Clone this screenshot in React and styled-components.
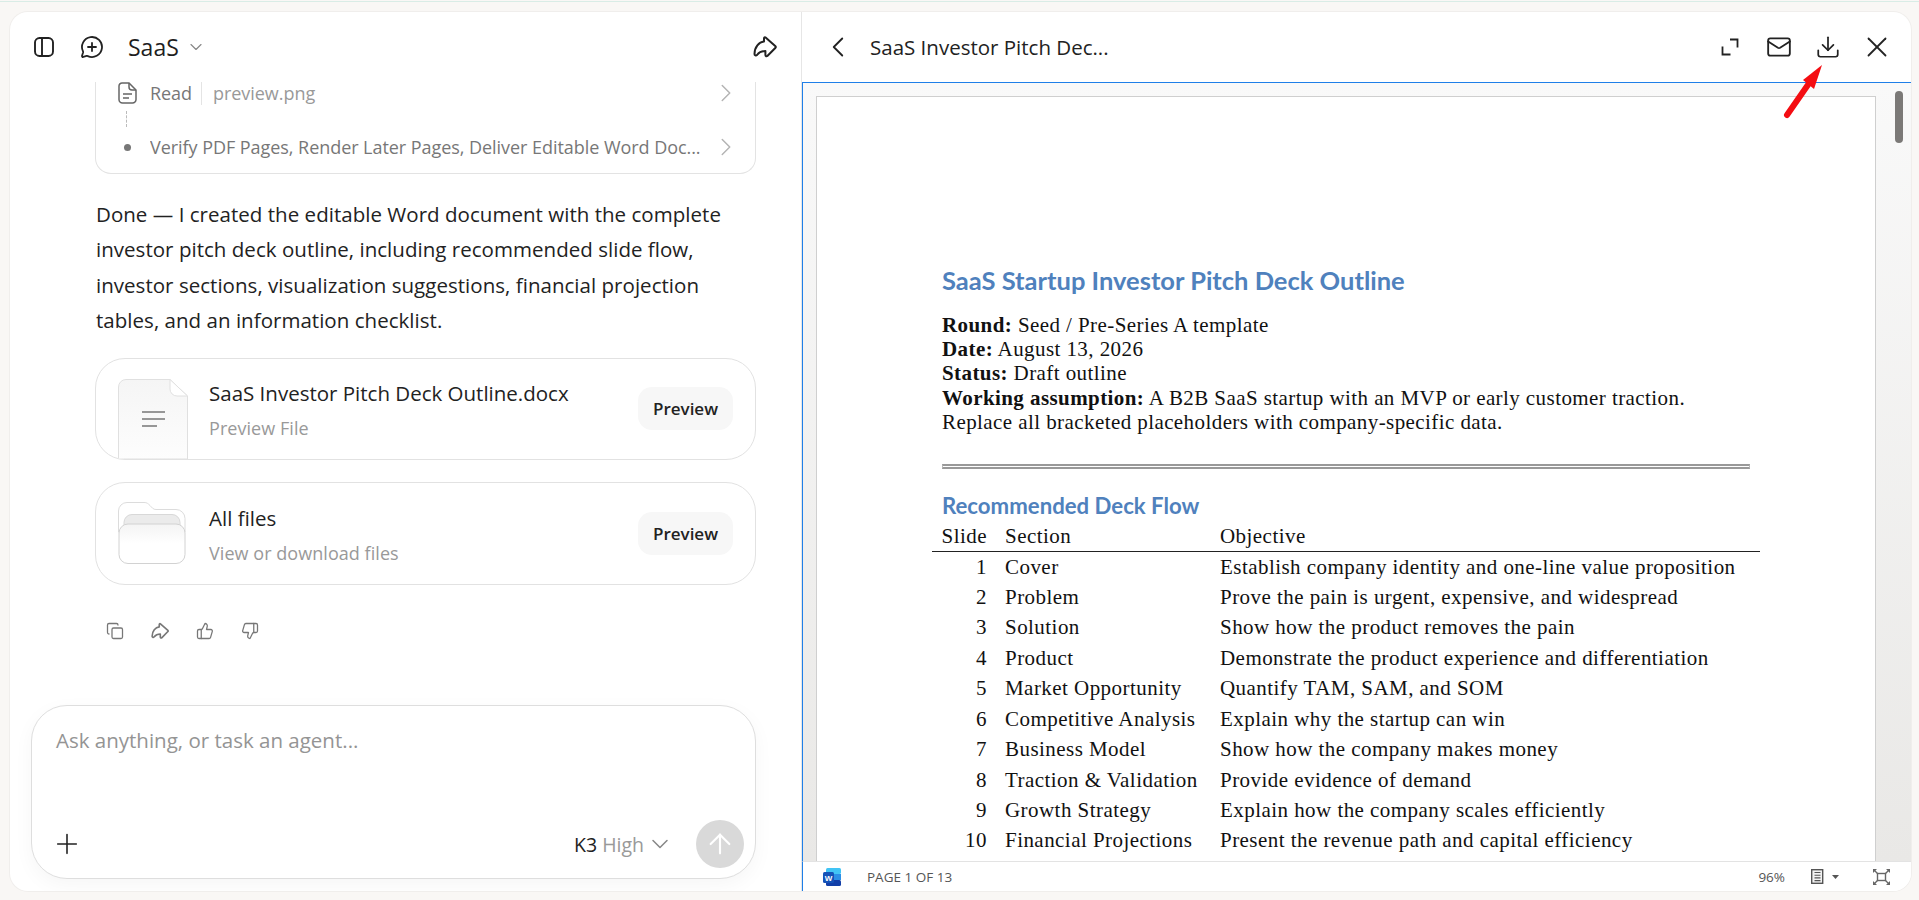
import styled, { createGlobalStyle } from "styled-components";
import {
  ArrowUp,
  ChevronDown,
  ChevronLeft,
  ChevronRight,
  Copy,
  Download,
  Mail,
  MessageCirclePlus,
  Plus,
  ThumbsDown,
  ThumbsUp,
  X,
} from "lucide-react";

const SANS = `"Open Sans", "Noto Sans", sans-serif`;
const DOC = `"Liberation Serif", serif`;
const BLUE = "#1f7fe8";

const GlobalStyle = createGlobalStyle`
  html, body {
    margin: 0;
    height: 100%;
    overflow: hidden;
    background: #f9f7f5;
    font-family: ${SANS};
  }
  * { box-sizing: border-box; }
`;

const Page = styled.div`
  width: 1919px;
  height: 899px;
  margin-top: 1px;
  border-top: 1px solid #d9ece6;
  padding: 10px 8px 9px 10px;
  position: relative;
`;

const Shell = styled.div`
  display: flex;
  height: 100%;
  background: #fff;
  border-radius: 18px;
  box-shadow: 0 0 0 1px #f0eeec;
  overflow: hidden;
`;

const ChatPanel = styled.section`
  width: 792px;
  flex: none;
  display: flex;
  flex-direction: column;
  border-right: 1px solid #e6e6e6;
`;

const ChatHeader = styled.header`
  height: 70px;
  flex: none;
  display: flex;
  align-items: center;
  padding: 0 24px;
`;

const IconBtn = styled.span`
  display: inline-flex;
  align-items: center;
  justify-content: center;
  color: ${(p) => p.$color || "#222"};
  margin-right: ${(p) => p.$mr || 0}px;
  margin-left: ${(p) => p.$ml || 0};
`;

const ChatTitle = styled.div`
  font-size: 23px;
  color: #1f1f1f;
  margin-right: 7px;
`;

const ChatBody = styled.div`
  flex: 1;
  min-height: 0;
  overflow: hidden;
  padding: 0 45px 0 85px;
`;

const ToolCard = styled.div`
  height: 92px;
  border: 1px solid #e3e3e3;
  border-top: none;
  border-radius: 0 0 16px 16px;
  padding: 0 14px 0 21px;
`;

const ToolRow = styled.div`
  display: flex;
  align-items: center;
  height: 22px;
  color: #777;
  font-size: 18px;
  letter-spacing: -0.05px;
  margin-top: ${(p) => p.$mt}px;
`;

const ToolIcon = styled.span`
  width: 20px;
  flex: none;
  margin-right: 13px;
  display: flex;
  justify-content: center;
`;

const Bullet = styled.i`
  width: 7px;
  height: 7px;
  border-radius: 50%;
  background: #777;
`;

const Dashed = styled.div`
  height: 16px;
  width: 0;
  margin: 7px 0 -23px 9px;
  border-left: 1px dashed #bbb;
`;

const ToolName = styled.span`
  padding-right: 9px;
  margin-right: 11px;
  border-right: 1px solid #e4e4e4;
`;

const ToolFile = styled.span`
  color: #999;
`;

const ToolText = styled.span`
  flex: 1;
  white-space: nowrap;
  overflow: hidden;
`;

const Message = styled.p`
  margin: 23px 0 0 1px;
  font-size: 20.5px;
  line-height: 35.4px;
  color: #222;
  letter-spacing: 0.03px;
  width: 640px;
`;

const FileCard = styled.div`
  display: flex;
  align-items: center;
  height: ${(p) => p.$h}px;
  margin-top: ${(p) => p.$mt}px;
  border: 1px solid #e2e2e2;
  border-radius: 30px;
  padding: 0 22px 0 22px;
  overflow: hidden;
`;

const FileGlyph = styled.span`
  flex: none;
  align-self: flex-end;
  margin-right: 21px;
`;

const FolderGlyph = styled.span`
  flex: none;
  display: flex;
  margin-right: 23px;
`;

const FileMeta = styled.div`
  flex: 1;
  padding-top: 2px;
`;

const FileName = styled.div`
  font-size: 20.5px;
  line-height: 28px;
  color: #222;
`;

const FileSub = styled.div`
  font-size: 18px;
  line-height: 24px;
  margin-top: 9px;
  color: #999;
  letter-spacing: 0.05px;
`;

const PreviewBtn = styled.button`
  width: 95px;
  height: 43px;
  border: none;
  border-radius: 14px;
  background: #f7f7f7;
  color: #222;
  font-family: ${SANS};
  font-size: 17px;
  font-weight: 600;
`;

const Actions = styled.div`
  display: flex;
  gap: 27px;
  padding: 37px 0 0 11px;
  color: #777;
`;

const Composer = styled.div`
  flex: none;
  height: 174px;
  margin: 0 45px 12px 21px;
  padding: 20px 11px 10px 24px;
  border: 1px solid #dedede;
  border-radius: 36px;
  background: #fff;
  box-shadow: 0 6px 20px rgba(0, 0, 0, 0.04);
  display: flex;
  flex-direction: column;
  justify-content: space-between;
`;

const Placeholder = styled.div`
  font-size: 20.5px;
  line-height: 28px;
  color: #949494;
`;

const ComposerRow = styled.div`
  display: flex;
  align-items: center;
  margin-left: -5px;
`;

const ModelLabel = styled.span`
  margin-left: auto;
  font-size: 19.5px;
  color: #222;
`;

const ModelLevel = styled.span`
  margin-left: 5px;
  margin-right: 2px;
  font-size: 19.5px;
  color: #999;
`;

const SendBtn = styled.span`
  width: 48px;
  height: 48px;
  margin-left: 22px;
  border-radius: 50%;
  background: #d9d9d9;
  color: #fff;
  display: flex;
  align-items: center;
  justify-content: center;
`;

const PreviewPanel = styled.section`
  flex: 1;
  min-width: 0;
  display: flex;
  flex-direction: column;
`;

const PreviewHeader = styled.header`
  height: 70px;
  flex: none;
  display: flex;
  align-items: center;
  padding: 0 10px 0 19px;
  color: #222;
`;

const PreviewTitle = styled.div`
  flex: 1;
  margin-left: 15px;
  font-size: 20.5px;
`;

const HeaderTools = styled.div`
  display: grid;
  grid-template-columns: repeat(4, 49px);
  justify-items: center;
  align-items: center;
`;

const Viewer = styled.div`
  flex: 1;
  min-height: 0;
  position: relative;
  overflow: hidden;
  background: linear-gradient(#f9f9f9, #e9e8e6);
  border-top: 1px solid ${BLUE};
  border-left: 1px solid ${BLUE};
  padding: 13px 35px 0 13px;
`;

const Scrollbar = styled.div`
  position: absolute;
  top: 8px;
  right: 8px;
  width: 8px;
  height: 52px;
  border-radius: 4px;
  background: #7b7977;
`;

const DocPage = styled.article`
  height: 100%;
  background: #fff;
  border: 1px solid #cfcfcf;
  border-bottom: none;
  overflow: hidden;
  padding: 167px 125px 0 125px;
  color: #111;
  font-family: ${DOC};
`;

const DocTitle = styled.h1`
  margin: 0;
  font-family: Lato, sans-serif;
  font-weight: 700;
  font-size: 25.5px;
  line-height: 32px;
  color: #4f81bd;
`;

const DocMeta = styled.p`
  margin: 16.5px 0 0;
  font-size: 21px;
  line-height: 24.4px;
  white-space: nowrap;
  letter-spacing: 0.42px;
`;

const DoubleRule = styled.div`
  height: 5px;
  margin: 29px 0 0;
  border-top: 2px solid #999;
  border-bottom: 2px solid #999;
  border-left: 1px solid #bbb;
  border-right: 1px solid #bbb;
`;

const DocH2 = styled.h2`
  margin: 24px 0 0;
  font-family: Lato, sans-serif;
  font-weight: 700;
  font-size: 22.2px;
  line-height: 26px;
  color: #4f81bd;
`;

const Table = styled.div`
  margin: 3px -10px 0 -10px;
  font-size: 21px;
  letter-spacing: 0.45px;
`;

const TableRow = styled.div`
  display: grid;
  grid-template-columns: 55px 233px 1fr;
  height: ${(p) => (p.$head ? 30 : 30.45)}px;
  line-height: ${(p) => (p.$head ? 29 : 30)}px;
  white-space: nowrap;
  border-bottom: ${(p) => (p.$head ? "1px solid #222" : "none")};
`;

const SlideCell = styled.span`
  text-align: right;
`;

const SectionCell = styled.span`
  padding-left: 18px;
`;

const StatusBar = styled.footer`
  height: 30px;
  flex: none;
  display: flex;
  align-items: center;
  background: #fff;
  border-top: 1px solid #e3e3e3;
  border-left: 1px solid ${BLUE};
  padding: 0 21px 0 20px;
  font-size: 13.5px;
  color: #555;
`;

const PageCount = styled.span`
  flex: 1;
  margin-left: 26px;
`;

const Zoom = styled.span`
  margin-right: 26px;
  font-size: 13.5px;
`;

const RedArrow = styled.svg`
  position: absolute;
  left: 1782px;
  top: 60px;
  pointer-events: none;
`;

const rows = [
  ["1", "Cover", "Establish company identity and one-line value proposition"],
  ["2", "Problem", "Prove the pain is urgent, expensive, and widespread"],
  ["3", "Solution", "Show how the product removes the pain"],
  ["4", "Product", "Demonstrate the product experience and differentiation"],
  ["5", "Market Opportunity", "Quantify TAM, SAM, and SOM"],
  ["6", "Competitive Analysis", "Explain why the startup can win"],
  ["7", "Business Model", "Show how the company makes money"],
  ["8", "Traction & Validation", "Provide evidence of demand"],
  ["9", "Growth Strategy", "Explain how the company scales efficiently"],
  ["10", "Financial Projections", "Present the revenue path and capital efficiency"],
];

function SidebarIcon() {
  return (
    <svg width="20" height="20" viewBox="0 0 20 20" fill="none" stroke="#222" strokeWidth="1.9">
      <rect x="1" y="1" width="18" height="18" rx="4.5" />
      <path d="M8 1v18" />
    </svg>
  );
}

function ShareIcon({ size, sw }) {
  return (
    <svg width={size} height={size} viewBox="0 0 24 22" fill="none" stroke="currentColor" strokeWidth={sw} strokeLinejoin="round">
      <path d="M12.6 1.5 22.5 10.2a1 1 0 0 1 0 1.5L14.6 19.8c-1 1-2.2.4-2.2-.8V15C8.5 15 6 16.5 4 19c-1 1-2.5.3-2.5-1C1.5 11 6 6 11 5.5V2.5c0-1 .9-1.6 1.6-1z" />
    </svg>
  );
}

function ReadIcon() {
  return (
    <svg width="19" height="22" viewBox="0 0 19 22" fill="none" stroke="#666" strokeWidth="1.5">
      <path d="M4 1h7l7 7v9.5a3.5 3.5 0 0 1-3.5 3.5h-10A3.5 3.5 0 0 1 1 17.5V4a3 3 0 0 1 3-3z" />
      <path d="M11 1v4a3 3 0 0 0 3 3h4M5 12h9M5 16h6" />
    </svg>
  );
}

function DocFileIcon() {
  return (
    <svg width="70" height="80" viewBox="0 0 70 80" style={{ display: "block" }}>
      <defs>
        <linearGradient id="fileFill" x1="0" y1="0" x2="0" y2="1">
          <stop offset="0" stopColor="#f5f5f5" />
          <stop offset="1" stopColor="#fdfdfd" />
        </linearGradient>
      </defs>
      <path
        d="M8 .5h44L69.5 17v63H.5V8A7.5 7.5 0 0 1 8 .5z"
        fill="url(#fileFill)"
        stroke="#e0e0e0"
      />
      <path d="M52 .5V10a7 7 0 0 0 7 7h10.5z" fill="#fff" stroke="#e0e0e0" />
      <path d="M24 33h23M24 40h23M24 47h15" stroke="#777" strokeWidth="1.5" />
    </svg>
  );
}

function FolderIcon() {
  return (
    <svg width="68" height="62" viewBox="0 0 68 62">
      <defs>
        <linearGradient id="folderFill" x1="0" y1="0" x2="0" y2="1">
          <stop offset="0" stopColor="#f4f4f4" />
          <stop offset="0.5" stopColor="#fff" />
        </linearGradient>
      </defs>
      <path
        d="M9 .5h17c3 0 4 1 6 3s3 4 6 4h20a9 9 0 0 1 9 9V30H.5V9A8.5 8.5 0 0 1 9 .5z"
        fill="#fff"
        stroke="#dcdcdc"
      />
      <rect x="6" y="12.5" width="56" height="24" rx="8" fill="#ebebeb" stroke="#d8d8d8" />
      <rect x="1" y="22" width="66" height="39.5" rx="9" fill="url(#folderFill)" stroke="#d2d2d2" />
    </svg>
  );
}

function ExpandIcon() {
  return (
    <svg width="18" height="18" viewBox="0 0 18 18" fill="none" stroke="#222" strokeWidth="1.8">
      <path d="M9 1.5h7.5v8M1.5 8.5v8h8" />
    </svg>
  );
}

function WordIcon() {
  return (
    <svg width="18" height="18" viewBox="0 0 18 18">
      <rect x="3" y="0" width="15" height="6" rx="1.5" fill="#41c4f5" />
      <rect x="3" y="6" width="15" height="6" fill="#2b8fe6" />
      <rect x="3" y="12" width="15" height="6" rx="1.5" fill="#123fa8" />
      <rect x="0" y="4" width="11" height="11" rx="1.5" fill="#1553b8" />
      <text x="5.5" y="12.5" textAnchor="middle" fontSize="8" fontWeight="700" fill="#fff" fontFamily="Liberation Sans">
        W
      </text>
    </svg>
  );
}

function LayoutIcon() {
  return (
    <svg width="28" height="15" viewBox="0 0 28 15" fill="none" style={{ marginRight: 34 }}>
      <rect x="0.7" y="0.7" width="11" height="13.6" fill="#f2f2f2" stroke="#555" strokeWidth="1.4" />
      <path d="M3.5 3.5h6M3.5 6.2h6M3.5 8.9h6M3.5 11.6h6" stroke="#555" strokeWidth="1.1" />
      <path d="M21 6h7l-3.5 4z" fill="#555" />
    </svg>
  );
}

function FullscreenIcon() {
  return (
    <svg width="17" height="16" viewBox="0 0 17 16" fill="none" stroke="#666">
      <rect x="4.5" y="4.5" width="8" height="7" strokeWidth="1.4" />
      <path d="M4.5 4.5 1 1M12.5 4.5 16 1M4.5 11.5 1 15M12.5 11.5 16 15" strokeWidth="1.4" />
      <path d="M0 0h4L0 4zM17 0h-4l4 4zM0 16h4l-4-4zM17 16h-4l4-4z" fill="#666" stroke="none" />
    </svg>
  );
}

export default function App() {
  return (
    <>
      <GlobalStyle />
      <Page>
        <Shell>
          <ChatPanel>
            <ChatHeader>
              <IconBtn $mr={26}>
                <SidebarIcon />
              </IconBtn>
              <IconBtn $mr={24}>
                <MessageCirclePlus size={24} strokeWidth={1.8} />
              </IconBtn>
              <ChatTitle>SaaS</ChatTitle>
              <IconBtn $color="#888">
                <ChevronDown size={20} strokeWidth={1.4} />
              </IconBtn>
              <IconBtn $ml="auto">
                <ShareIcon size={24} sw={2} />
              </IconBtn>
            </ChatHeader>
            <ChatBody>
              <ToolCard>
                <ToolRow $mt={0}>
                  <ToolIcon>
                    <ReadIcon />
                  </ToolIcon>
                  <ToolName>Read</ToolName>
                  <ToolText>
                    <ToolFile>preview.png</ToolFile>
                  </ToolText>
                  <ChevronRight size={30} color="#b5b5b5" strokeWidth={1.2} />
                </ToolRow>
                <Dashed />
                <ToolRow $mt={32}>
                  <ToolIcon>
                    <Bullet />
                  </ToolIcon>
                  <ToolText>Verify PDF Pages, Render Later Pages, Deliver Editable Word Doc...</ToolText>
                  <ChevronRight size={30} color="#b5b5b5" strokeWidth={1.2} />
                </ToolRow>
              </ToolCard>
              <Message>
                Done — I created the editable Word document with the complete investor pitch deck
                outline, including recommended slide flow, investor sections, visualization
                suggestions, financial projection tables, and an information checklist.
              </Message>
              <FileCard $h={102} $mt={19}>
                <FileGlyph>
                  <DocFileIcon />
                </FileGlyph>
                <FileMeta>
                  <FileName>SaaS Investor Pitch Deck Outline.docx</FileName>
                  <FileSub>Preview File</FileSub>
                </FileMeta>
                <PreviewBtn>Preview</PreviewBtn>
              </FileCard>
              <FileCard $h={103} $mt={22}>
                <FolderGlyph>
                  <FolderIcon />
                </FolderGlyph>
                <FileMeta>
                  <FileName>All files</FileName>
                  <FileSub>View or download files</FileSub>
                </FileMeta>
                <PreviewBtn>Preview</PreviewBtn>
              </FileCard>
              <Actions>
                <Copy size={18} strokeWidth={1.7} />
                <ShareIcon size={18} sw={2.2} />
                <ThumbsUp size={18} strokeWidth={1.7} />
                <ThumbsDown size={18} strokeWidth={1.7} />
              </Actions>
            </ChatBody>
            <Composer>
              <Placeholder>Ask anything, or task an agent...</Placeholder>
              <ComposerRow>
                <Plus size={32} color="#222" strokeWidth={1.2} />
                <ModelLabel>K3</ModelLabel>
                <ModelLevel>High</ModelLevel>
                <ChevronDown size={28} color="#888" strokeWidth={1.3} />
                <SendBtn>
                  <ArrowUp size={32} strokeWidth={1.6} />
                </SendBtn>
              </ComposerRow>
            </Composer>
          </ChatPanel>
          <PreviewPanel>
            <PreviewHeader>
              <ChevronLeft size={34} strokeWidth={1.3} />
              <PreviewTitle>SaaS Investor Pitch Dec...</PreviewTitle>
              <HeaderTools>
                <ExpandIcon />
                <Mail size={26} strokeWidth={1.7} />
                <Download size={26} strokeWidth={1.6} />
                <X size={34} strokeWidth={1.25} />
              </HeaderTools>
            </PreviewHeader>
            <Viewer>
              <Scrollbar />
              <DocPage>
                <DocTitle>SaaS Startup Investor Pitch Deck Outline</DocTitle>
                <DocMeta>
                  <b>Round:</b> Seed / Pre-Series A template
                  <br />
                  <b>Date:</b> August 13, 2026
                  <br />
                  <b>Status:</b> Draft outline
                  <br />
                  <b>Working assumption:</b> A B2B SaaS startup with an MVP or early customer traction.
                  <br />
                  Replace all bracketed placeholders with company-specific data.
                </DocMeta>
                <DoubleRule />
                <DocH2>Recommended Deck Flow</DocH2>
                <Table>
                  <TableRow $head>
                    <SlideCell>Slide</SlideCell>
                    <SectionCell>Section</SectionCell>
                    <span>Objective</span>
                  </TableRow>
                  {rows.map(([n, section, objective]) => (
                    <TableRow key={n}>
                      <SlideCell>{n}</SlideCell>
                      <SectionCell>{section}</SectionCell>
                      <span>{objective}</span>
                    </TableRow>
                  ))}
                </Table>
              </DocPage>
            </Viewer>
            <StatusBar>
              <WordIcon />
              <PageCount>PAGE 1 OF 13</PageCount>
              <Zoom>96%</Zoom>
              <LayoutIcon />
              <FullscreenIcon />
            </StatusBar>
          </PreviewPanel>
        </Shell>
        <RedArrow width="46" height="58" viewBox="0 0 46 58">
          <path d="M5 53 30 17" stroke="#f40d12" strokeWidth="6" strokeLinecap="round" />
          <path d="M40 3 21 18l11 9z" fill="#f40d12" />
        </RedArrow>
      </Page>
    </>
  );
}
